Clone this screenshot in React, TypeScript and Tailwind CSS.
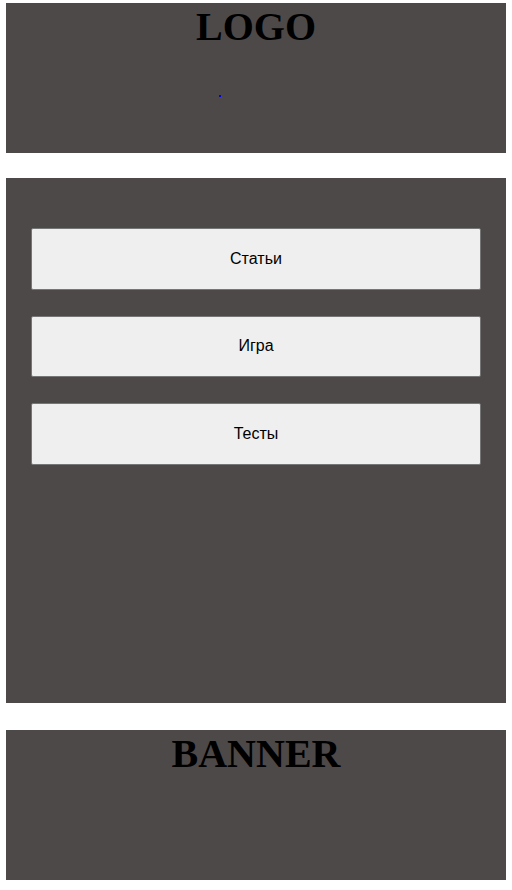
export default function App() {
  const links = ["Статьи", "Игра", "Тесты"]

  return (
    <div className="min-h-[890px] w-[512px] bg-white pt-[3px]">
      <header className="mx-[6px] h-[150px] bg-[#4e4949] text-center">
        <h1 className="m-0 font-['Liberation_Serif',serif] text-[40px] font-bold leading-[normal] text-black">
          LOGO
        </h1>
        <div className="mt-[45px] flex pl-[213px]">
          <a href="#" className="block h-[2px] w-[2px] bg-[#0000ee]" aria-label="home" />
        </div>
      </header>

      <nav className="mx-[6px] mt-[25px] flex h-[525px] flex-col gap-[26px] bg-[#4e4949] px-[25px] pt-[50px]">
        {links.map((label) => (
          <button
            key={label}
            type="button"
            className="h-[61.5px] w-full rounded-[2px] border border-[#767676] bg-[#efefef] font-['Liberation_Sans',Arial,sans-serif] text-[16px] text-black"
          >
            {label}
          </button>
        ))}
      </nav>

      <footer className="mx-[6px] mt-[27px] h-[150px] bg-[#4e4949] text-center">
        <h2 className="m-0 font-['Liberation_Serif',serif] text-[40px] font-bold leading-[normal] text-black">
          BANNER
        </h2>
      </footer>
    </div>
  )
}
